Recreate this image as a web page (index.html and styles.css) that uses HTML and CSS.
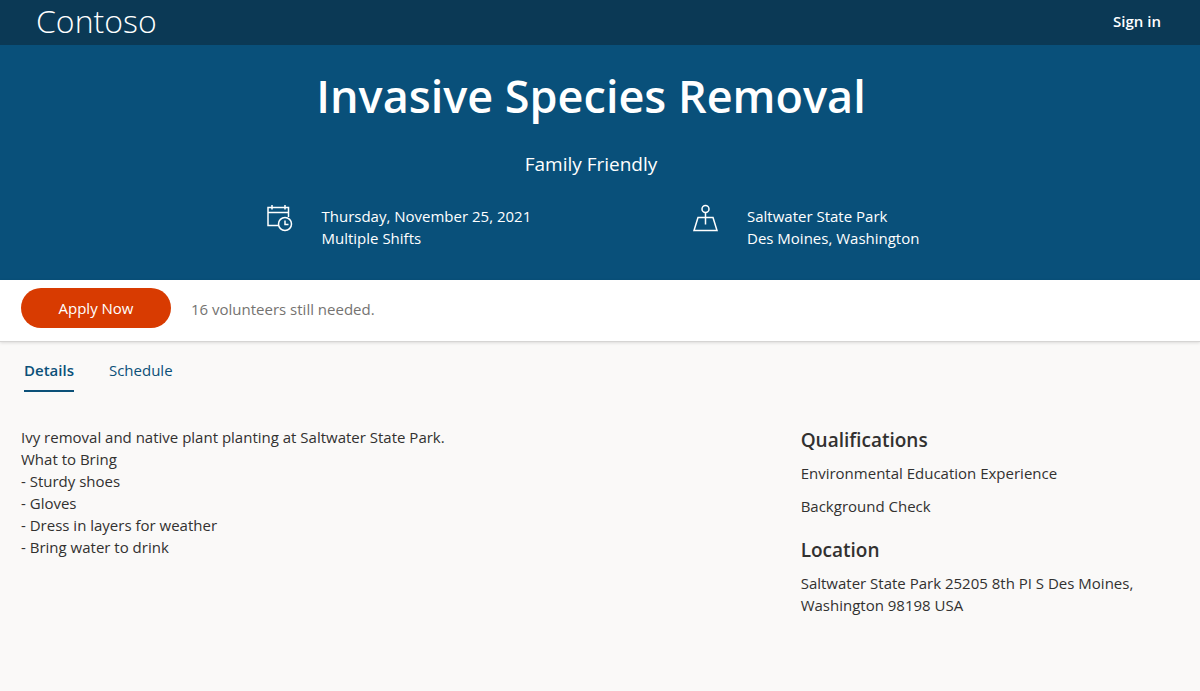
FILE: index.html
```html
<!DOCTYPE html>
<html lang="en">
<head>
<meta charset="utf-8">
<meta name="viewport" content="width=device-width, initial-scale=1">
<title>Invasive Species Removal</title>
<link rel="stylesheet" href="styles.css">
</head>
<body>
<header class="topbar">
  <a class="brand" href="#">Contoso</a>
  <a class="signin" href="#">Sign in</a>
</header>
<section class="hero">
  <h1 class="title">Invasive Species Removal</h1>
  <p class="tagline">Family Friendly</p>
  <div class="facts">
    <div class="fact">
      <svg class="fact-icon" viewBox="0 0 28 28" aria-hidden="true">
        <path d="M13 20.500H3V2.500H23.500V12M3 7.500H23.500M7 0V4.500M20 0V4.500"/>
        <circle cx="20" cy="19" r="6.500"/>
        <path d="M20 15.500V19.500H23.500"/>
      </svg>
      <p class="fact-text">Thursday, November 25, 2021<br>Multiple Shifts</p>
    </div>
    <div class="fact">
      <svg class="fact-icon" viewBox="0 0 28 28" aria-hidden="true">
        <circle cx="14.500" cy="4" r="3.500"/>
        <path d="M14.500 7.500V19.500M7 12.500H22L26 25.500H3Z"/>
      </svg>
      <p class="fact-text">Saltwater State Park<br>Des Moines, Washington</p>
    </div>
  </div>
</section>
<section class="applybar">
  <button class="apply" type="button">Apply Now</button>
  <p class="needed">16 volunteers still needed.</p>
</section>
<nav class="tabs">
  <a class="tab tab-active" href="#details" aria-current="page">Details</a>
  <a class="tab" href="#schedule">Schedule</a>
</nav>
<main class="content" id="details">
  <p class="description">Ivy removal and native plant planting at Saltwater State Park.<br>What to Bring<br>- Sturdy shoes<br>- Gloves<br>- Dress in layers for weather<br>- Bring water to drink</p>
  <aside class="side">
    <section class="side-block">
      <h2 class="side-title">Qualifications</h2>
      <p class="side-text">Environmental Education Experience</p>
      <p class="side-text">Background Check</p>
    </section>
    <section class="side-block">
      <h2 class="side-title">Location</h2>
      <p class="side-text">Saltwater State Park 25205 8th PI S Des Moines, Washington 98198 USA</p>
    </section>
  </aside>
</main>
</body>
</html>
```
FILE: styles.css
```css
* { box-sizing: border-box; }
body {
  margin: 0;
  background: #faf9f8;
  color: #323130;
  font: 15px/22px "Segoe UI", "Open Sans", "Noto Sans", sans-serif;
}
h1, h2, p { margin: 0; }
a { color: inherit; text-decoration: none; }
.topbar {
  display: flex;
  align-items: center;
  justify-content: space-between;
  padding: 0 39px 3px 36px;
  background: #0b3955;
  color: #fff;
}
.brand { font-size: 32px; line-height: 42px; font-weight: 300; }
.signin { font-weight: 600; }
.hero {
  padding: 19px 18px 31px 0;
  background: #09507a;
  color: #fff;
  text-align: center;
}
.title { font-size: 45px; line-height: 64px; font-weight: 600; }
.tagline { margin-top: 21px; font-size: 19px; line-height: 30px; }
.facts {
  display: grid;
  grid-template-columns: 1fr 1fr;
  width: 72%;
  margin: 26px auto 0;
  text-align: left;
}
.fact { display: flex; gap: 28px; padding-left: 100px; }
.fact-icon {
  flex: none;
  width: 28px;
  height: 28px;
  overflow: visible;
  fill: none;
  stroke: currentColor;
  stroke-width: 1.5;
}
.fact-text { white-space: nowrap; }
.applybar {
  display: flex;
  gap: 20px;
  padding: 8px 21px 13px;
  background: #fff;
  border-bottom: 1px solid #d6d5d4;
  box-shadow: 0 1px 3px rgba(0, 0, 0, .12);
}
.apply {
  width: 150px;
  height: 40px;
  border: 0;
  border-radius: 20px;
  background: #d83b01;
  color: #fff;
  font: inherit;
}
.needed { padding-top: 10px; color: #757371; }
.tabs {
  display: flex;
  gap: 35px;
  padding: 17px 24px 0;
  color: #0b5078;
}
.tab { padding-bottom: 9px; border-bottom: 2px solid transparent; }
.tab-active { border-color: currentColor; font-weight: 600; }
.content {
  display: grid;
  grid-template-columns: 2fr 1fr;
  gap: 23px;
  padding: 34px 21px 40px;
}
.side {
  display: flex;
  flex-direction: column;
  gap: 22px;
  padding-top: 3px;
}
.side-block {
  display: flex;
  flex-direction: column;
  gap: 11px;
}
.side-title { font-size: 19px; line-height: 22px; font-weight: 600; }
```
